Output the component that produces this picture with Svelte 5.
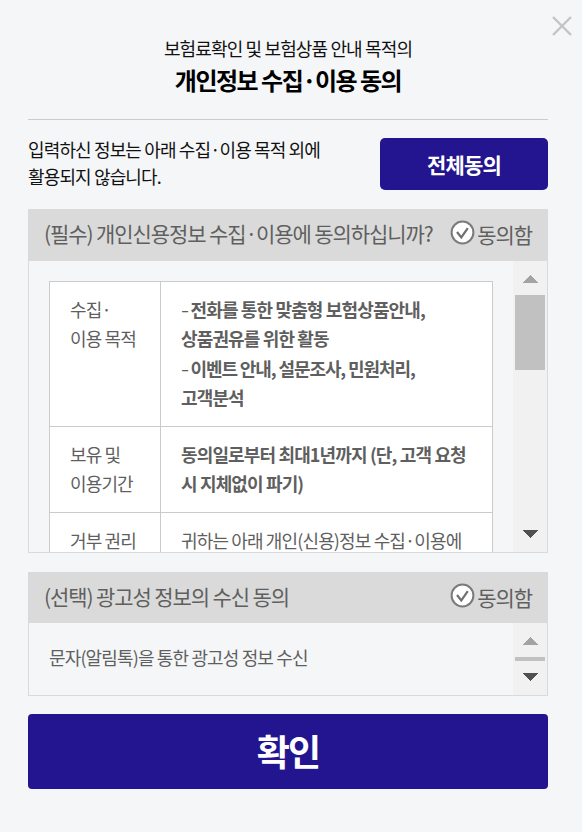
<script>
  const purposes = [
    {
      label: ['수집·', '이용 목적'],
      text: [
        { dash: true, body: '전화를 통한 맞춤형 보험상품안내,' },
        { body: '상품권유를 위한 활동' },
        { dash: true, tight: true, body: '이벤트 안내, 설문조사, 민원처리,' },
        { body: '고객분석' },
      ],
      strong: true,
    },
    {
      label: ['보유 및', '이용기간'],
      text: [{ body: '동의일로부터 최대1년까지 (단, 고객 요청' }, { body: '시 지체없이 파기)' }],
      strong: true,
    },
    {
      label: ['거부 권리'],
      text: [{ body: '귀하는 아래 개인(신용)정보 수집·이용에' }],
      strong: false,
    },
  ];
</script>

{#snippet agree()}
  <label class="agree">
    <svg width="25" height="25" viewBox="0 0 25 25" fill="none">
      <circle cx="12.5" cy="12.5" r="10.9" fill="#fff" stroke="#7b7b7b" stroke-width="2" />
      <path d="M7 12 11.3 17.4 17.8 8.2" stroke="#707070" stroke-width="2.2" />
    </svg>
    <span>동의함</span>
  </label>
{/snippet}

{#snippet scrollbar(kind)}
  <div class="scrollbar {kind}">
    <svg width="16" height="8" viewBox="0 0 16 8" shape-rendering="crispEdges"><path d="M8 0 16 8H0Z" fill="#a3a3a3" /></svg>
    <div class="thumb"></div>
    <svg class="down" width="16" height="8" viewBox="0 0 16 8" shape-rendering="crispEdges"><path d="M0 0H16L8 8Z" fill="#505050" /></svg>
  </div>
{/snippet}

<main class="dialog">
  <button class="close" aria-label="닫기">
    <svg width="20" height="20" viewBox="0 0 20 20"><path d="M1 1 19 19M19 1 1 19" stroke="#c3c4c5" stroke-width="2.4" /></svg>
  </button>

  <header>
    <p>보험료확인 및 보험상품 안내 목적의</p>
    <h1>개인정보 수집·이용 동의</h1>
  </header>

  <section class="intro">
    <p>입력하신 정보는 아래 수집·이용 목적 외에<br />활용되지 않습니다.</p>
    <button class="all">전체동의</button>
  </section>

  <section class="consent required">
    <div class="bar"><h2>(필수) 개인신용정보 수집·이용에 동의하십니까?</h2>{@render agree()}</div>
    <div class="body">
      <div class="content">
        <div class="table">
          {#each purposes as row}
            <div class="row">
              <div class="th">{#each row.label as line}<div>{line}</div>{/each}</div>
              <div class="td" class:strong={row.strong}>
                {#each row.text as line}
                  <div class:tight={line.tight}>{#if line.dash}<span class="dash">-</span>{/if}{line.body}</div>
                {/each}
              </div>
            </div>
          {/each}
        </div>
      </div>
      {@render scrollbar('tall')}
    </div>
  </section>

  <section class="consent optional">
    <div class="bar"><h2>(선택) 광고성 정보의 수신 동의</h2>{@render agree()}</div>
    <div class="body">
      <div class="content"><p>문자(알림톡)을 통한 광고성 정보 수신</p></div>
      {@render scrollbar('short')}
    </div>
  </section>

  <button class="confirm">확인</button>
</main>

<style>
  :global(body) { background: #f5f6f8; }
  .dialog {
    position: relative;
    box-sizing: border-box;
    width: 582px;
    height: 832px;
    padding: 34px 34px 0 28px;
    overflow: hidden;
    background: #f5f6f8;
    color: #111;
    font-family: "Noto Sans CJK KR", "Noto Sans", sans-serif;
    font-size: 18px;
    letter-spacing: -0.86px;
    white-space: nowrap;
  }
  p, h1, h2 { margin: 0; }
  button { border: 0; padding: 0; font-family: inherit; letter-spacing: inherit; }
  svg { display: block; flex: none; }
  .close { position: absolute; left: 552px; top: 16px; background: none; }
  header {
    box-sizing: border-box;
    width: 520px;
    height: 86px;
    border-bottom: 1px solid #cbccce;
    text-align: center;
  }
  header p { line-height: 28px; }
  h1 { color: #000; font-size: 24px; line-height: 36px; font-weight: 700; letter-spacing: -1.5px; }
  .intro {
    display: flex;
    justify-content: space-between;
    width: 520px;
    height: 52px;
    margin-top: 18px;
  }
  .intro p { line-height: 27px; margin-top: -2px; }
  .all {
    width: 168px;
    height: 52px;
    border-radius: 5px;
    background: #23158f;
    color: #fff;
    font-size: 21px;
    font-weight: 700;
    letter-spacing: -0.8px;
  }
  .consent { width: 520px; margin-top: 19px; color: #5f5f5f; }
  .bar {
    box-sizing: border-box;
    display: flex;
    align-items: center;
    justify-content: space-between;
    height: 52px;
    padding: 0 16px 3px 16px;
    background: #dadada;
  }
  h2 { margin-bottom: 2px; font-size: 21px; font-weight: 400; line-height: 30px; letter-spacing: -1.1px; }
  .agree { display: flex; align-items: center; gap: 2px; font-size: 21px; line-height: 30px; letter-spacing: -1.05px; }
  .agree svg { margin-bottom: 2px; }
  .body {
    box-sizing: border-box;
    display: flex;
    height: 292px;
    border: 1px solid #d8dade;
    border-top: 0;
    overflow: hidden;
  }
  .content { flex: 1; padding: 20px 20px 0; overflow: hidden; }
  .table { border: 1px solid #cacbcd; border-bottom: 0; background: #fff; }
  .row { display: grid; grid-template-columns: 111px 1fr; border-bottom: 1px solid #cacbcd; line-height: 29.25px; }
  .row:nth-child(1) { height: 144px; }
  .row:nth-child(2) { height: 85px; }
  .row:nth-child(3) { height: 144px; }
  .th, .td { padding: 13px 0 0 20px; }
  .th { border-right: 1px solid #cacbcd; }
  .strong { font-weight: 700; }
  .tight { letter-spacing: -1.1px; }
  .dash {
    display: inline-block;
    width: 9.5px;
    font-weight: 400;
    transform: scaleX(1.3);
    transform-origin: left;
  }
  .scrollbar {
    box-sizing: border-box;
    display: flex;
    flex-direction: column;
    align-items: center;
    width: 34px;
    padding: 14px 0;
    background: #f1f1f1;
  }
  .thumb { width: 30px; margin-top: 12px; background: #c1c1c1; }
  .tall .thumb { height: 75px; }
  .short .thumb { height: 4px; }
  .down { margin-top: auto; }
  .optional .bar { height: 51px; padding-bottom: 2px; }
  .optional .body { height: 73px; }
  .optional p { line-height: 29px; }
  .confirm {
    display: block;
    width: 520px;
    height: 75px;
    margin-top: 18px;
    padding-bottom: 3px;
    border-radius: 4px;
    background: #23158f;
    color: #fff;
    font-size: 36px;
    font-weight: 700;
    letter-spacing: -1.8px;
  }
</style>
